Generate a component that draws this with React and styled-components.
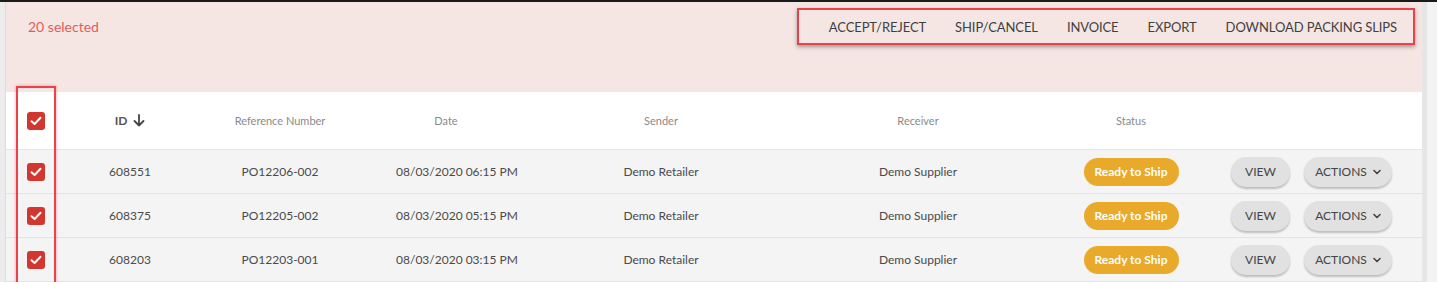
import React from 'react';
import styled, { createGlobalStyle } from 'styled-components';

const GlobalStyle = createGlobalStyle`
  html, body {
    margin: 0;
    padding: 0;
    background: #eeeeee;
    font-family: Lato, 'Open Sans', sans-serif;
  }
`;

const Frame = styled.div`
  display: flex;
  height: 282px;
  border-top: 2px solid #1a1a1a;
  box-sizing: border-box;
  overflow: hidden;
`;

const Gutter = styled.div`
  width: 5px;
  border-right: 1px solid #dcdcdc;
  background: #ececec;
`;

const Scrollbar = styled.div`
  width: 15px;
  background: #f3f3f3;
  border-left: 5px solid #e6e6e6;
  box-sizing: border-box;
`;

const Panel = styled.div`
  flex: 1;
  position: relative;
  background: #f4f4f4;
`;

const SelectionBar = styled.div`
  height: 90px;
  background: #f5e6e4;
  display: flex;
  align-items: flex-start;
  justify-content: space-between;
  padding: 6px 7px 0 22px;
  box-sizing: border-box;
`;

const SelectedCount = styled.div`
  color: #df5f58;
  font-size: 14px;
  line-height: 37px;
`;

const BulkActions = styled.div`
  display: flex;
  align-items: center;
  height: 37px;
  padding: 0 16px 0 30px;
  gap: 29px;
  border: 2px solid #e8434a;
  box-shadow: 0 2px 4px rgba(0, 0, 0, 0.35);
  box-sizing: border-box;
`;

const BulkAction = styled.span`
  font-size: 13px;
  color: #3f3f3f;
  letter-spacing: -0.1px;
`;

const cols = '60px 128px 172px 182px 226px 288px 138px 1fr';

const HeaderRow = styled.div`
  display: grid;
  grid-template-columns: ${cols};
  height: 58px;
  align-items: center;
  background: #ffffff;
  border-bottom: 1px solid #e6e6e6;
  box-sizing: border-box;
`;

const Row = styled.div`
  display: grid;
  grid-template-columns: ${cols};
  height: 44px;
  align-items: center;
  border-bottom: 1px solid #e4e4e4;
  box-sizing: border-box;
`;

const Cell = styled.div`
  display: flex;
  justify-content: center;
  align-items: center;
  font-size: ${p => (p.$head ? '11px' : '12px')};
  color: ${p => (p.$head ? '#8a8a8a' : '#4a4a4a')};
  padding-right: ${p => p.$shift || 0}px;
`;

const SortLabel = styled.span`
  display: inline-flex;
  align-items: center;
  gap: 6px;
  font-size: 12px;
  font-weight: 700;
  color: #555;
`;

const ButtonCell = styled.div`
  display: flex;
  align-items: center;
  gap: 14px;
  padding-left: 31px;
`;

const Box = styled.span`
  width: 18px;
  height: 18px;
  border-radius: 3px;
  background: #d2362e;
  display: inline-flex;
  align-items: center;
  justify-content: center;
`;

const StatusPill = styled.span`
  display: inline-flex;
  align-items: center;
  justify-content: center;
  width: 95px;
  height: 28px;
  border-radius: 14px;
  background: #e9aa2c;
  color: #fff;
  font-size: 12px;
  font-weight: 700;
`;

const PillButton = styled.button`
  display: inline-flex;
  align-items: center;
  justify-content: center;
  gap: 6px;
  width: ${p => p.$w}px;
  height: 30px;
  border: none;
  border-radius: 15px;
  background: #e1e1e1;
  box-shadow: 0 2px 2px rgba(0, 0, 0, 0.22);
  color: #444;
  font-family: inherit;
  font-size: 12px;
  padding: 0;
`;

const ColumnHighlight = styled.div`
  position: absolute;
  left: 10px;
  top: 84px;
  width: 36px;
  height: 210px;
  border: 2px solid #e8434a;
  box-shadow: 0 0 3px rgba(232, 67, 74, 0.5);
  pointer-events: none;
`;

const Check = () => (
  <Box>
    <svg width="12" height="10" viewBox="0 0 12 10">
      <path d="M1.5 5.2 L4.6 8 L10.5 1.8" fill="none" stroke="#fff" strokeWidth="2" strokeLinecap="round" strokeLinejoin="round" />
    </svg>
  </Box>
);

const rows = [
  { id: '608551', ref: 'PO12206-002', date: '08/03/2020 06:15 PM' },
  { id: '608375', ref: 'PO12205-002', date: '08/03/2020 05:15 PM' },
  { id: '608203', ref: 'PO12203-001', date: '08/03/2020 03:15 PM' },
];

const bulk = ['ACCEPT/REJECT', 'SHIP/CANCEL', 'INVOICE', 'EXPORT', 'DOWNLOAD PACKING SLIPS'];

export default function App() {
  return (
    <>
      <GlobalStyle />
      <Frame>
        <Gutter />
        <Panel>
          <SelectionBar>
            <SelectedCount>20 selected</SelectedCount>
            <BulkActions>
              {bulk.map(b => <BulkAction key={b}>{b}</BulkAction>)}
            </BulkActions>
          </SelectionBar>
          <HeaderRow>
            <Cell><Check /></Cell>
            <Cell $head>
              <SortLabel>
                ID
                <svg width="12" height="13" viewBox="0 0 12 13">
                  <path d="M6 1 V11.5 M1.5 7 L6 11.5 L10.5 7" fill="none" stroke="#444" strokeWidth="1.8" strokeLinecap="round" strokeLinejoin="round" />
                </svg>
              </SortLabel>
            </Cell>
            <Cell $head>Reference Number</Cell>
            <Cell $head $shift={22}>Date</Cell>
            <Cell $head>Sender</Cell>
            <Cell $head>Receiver</Cell>
            <Cell $head>Status</Cell>
            <div />
          </HeaderRow>
          {rows.map(r => (
            <Row key={r.id}>
              <Cell><Check /></Cell>
              <Cell>{r.id}</Cell>
              <Cell>{r.ref}</Cell>
              <Cell>{r.date}</Cell>
              <Cell>Demo Retailer</Cell>
              <Cell>Demo Supplier</Cell>
              <Cell><StatusPill>Ready to Ship</StatusPill></Cell>
              <ButtonCell>
                <PillButton $w={59}>VIEW</PillButton>
                <PillButton $w={88}>
                  ACTIONS
                  <svg width="8" height="6" viewBox="0 0 8 6">
                    <path d="M1 1.5 L4 4.5 L7 1.5" fill="none" stroke="#444" strokeWidth="1.6" strokeLinecap="round" strokeLinejoin="round" />
                  </svg>
                </PillButton>
              </ButtonCell>
            </Row>
          ))}
          <ColumnHighlight />
        </Panel>
        <Scrollbar />
      </Frame>
    </>
  );
}
